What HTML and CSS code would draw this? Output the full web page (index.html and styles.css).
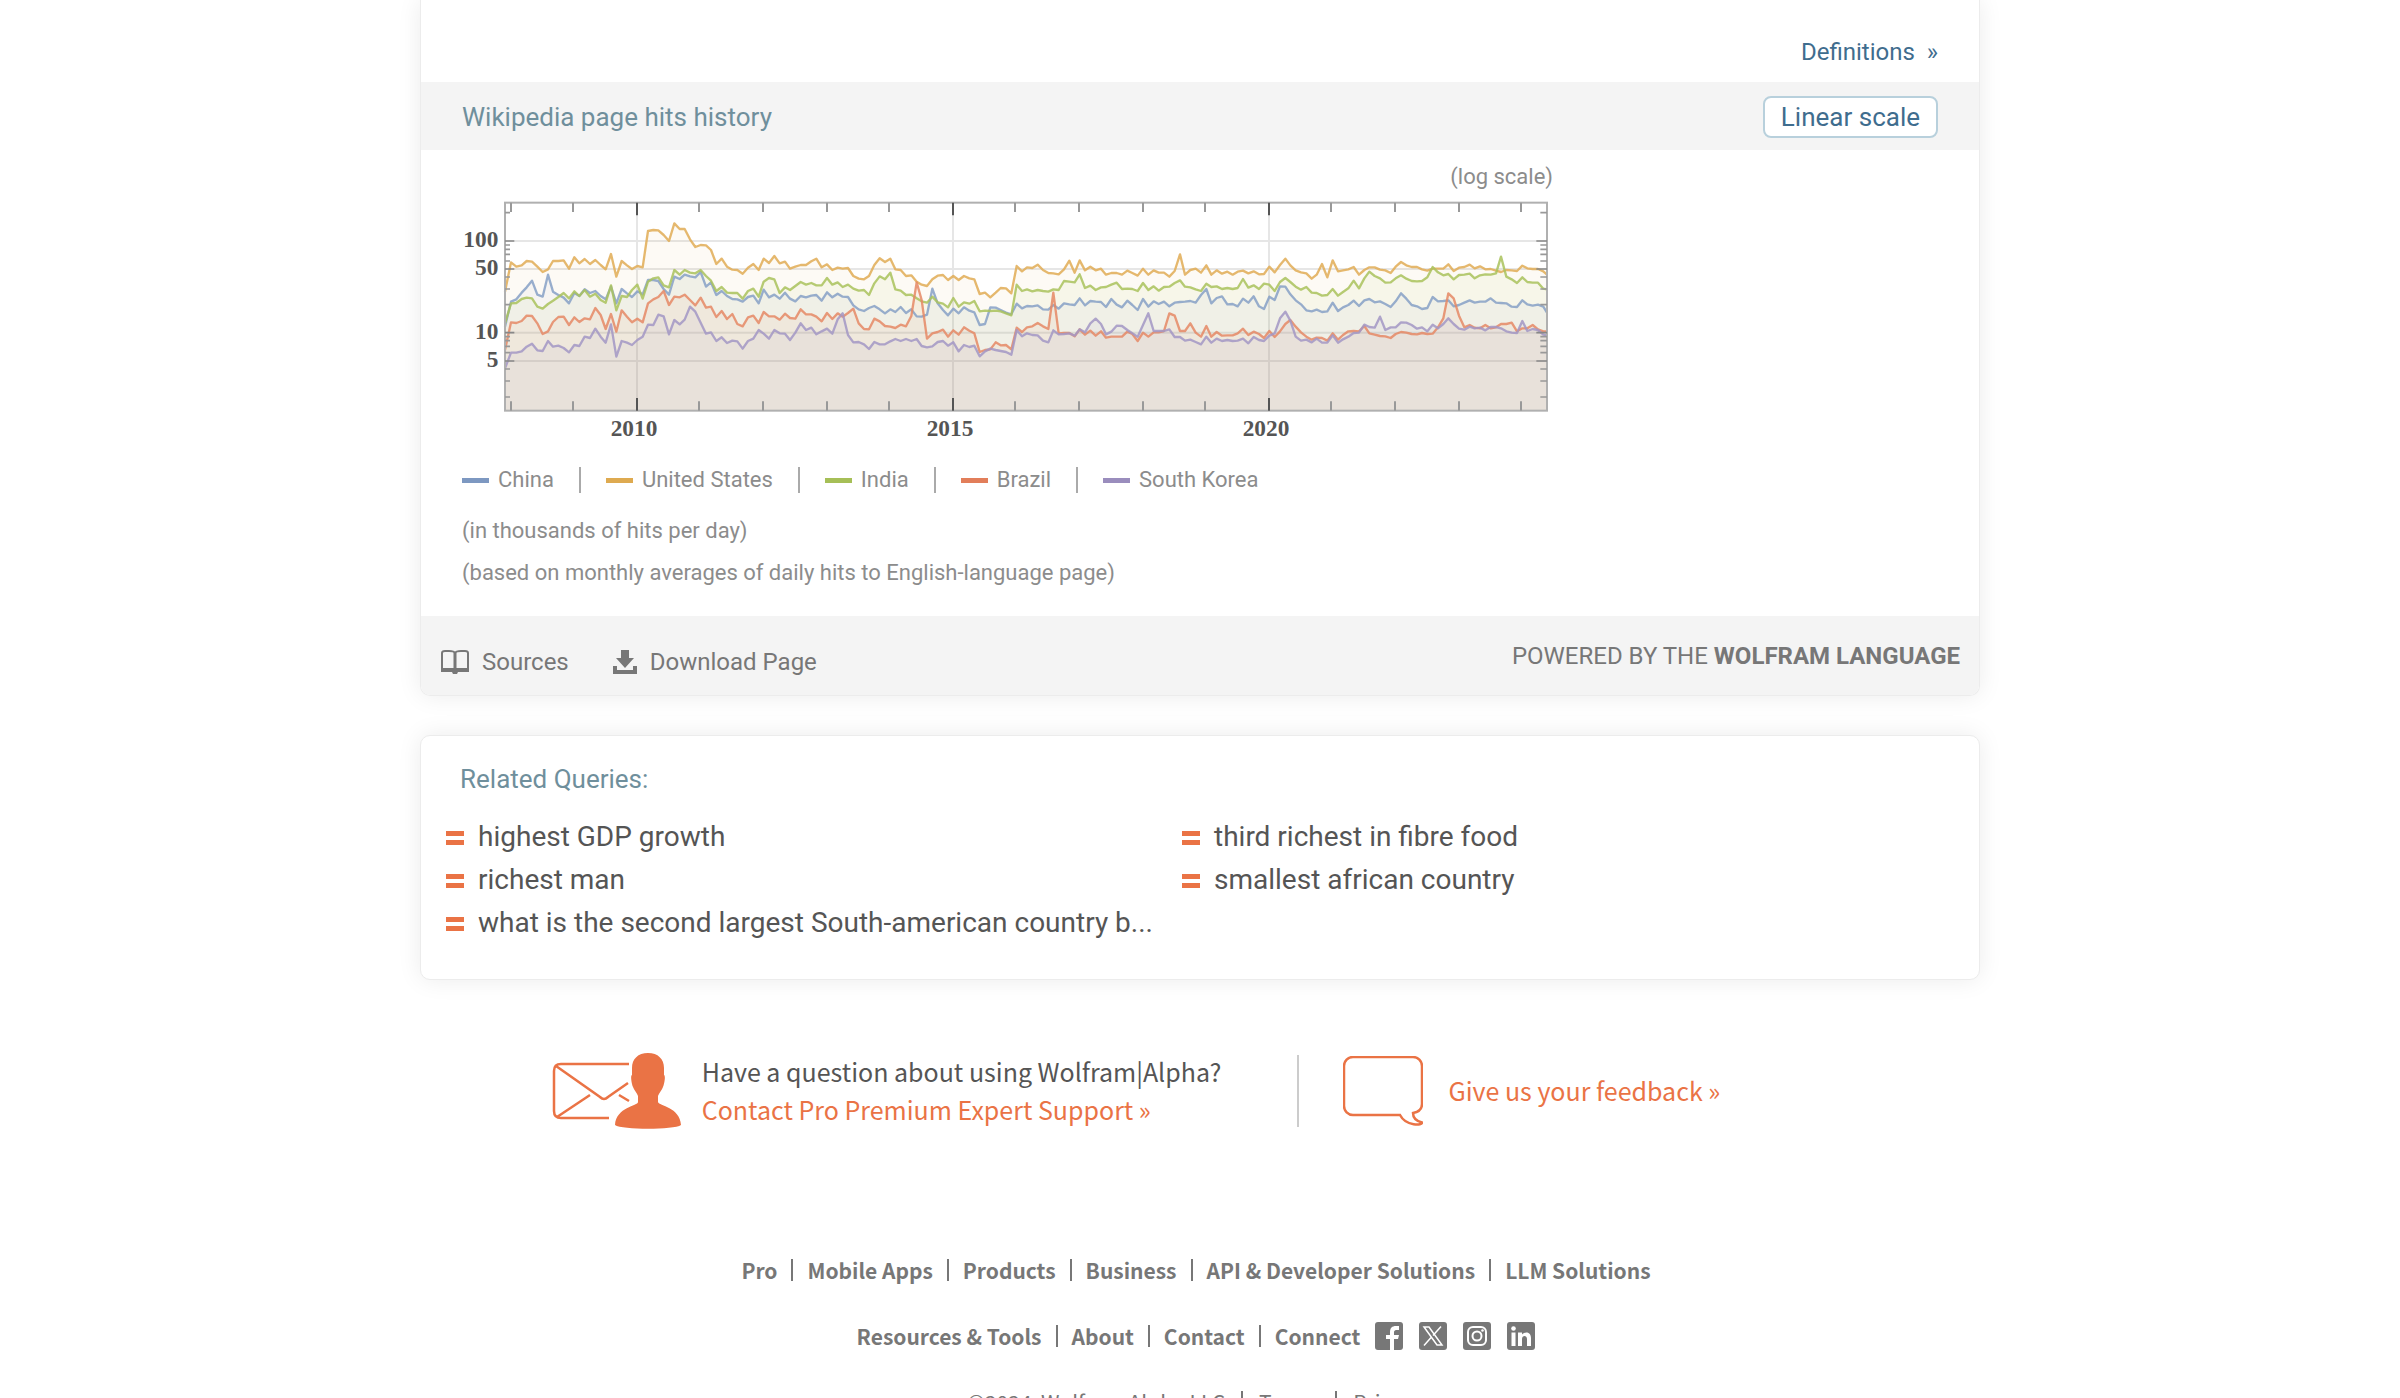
FILE: index.html
```html
<!DOCTYPE html>
<html lang="en">
<head>
<meta charset="utf-8">
<title>Wolfram|Alpha</title>
<link rel="stylesheet" href="styles.css">
</head>
<body>
<main class="page">
  <section class="card results">
    <div class="definitions"><a href="#">Definitions&nbsp; »</a></div>
    <header class="pod-head">
      <h2 class="pod-title">Wikipedia page hits history</h2>
      <button class="scale-button" type="button">Linear scale</button>
    </header>
    <div class="pod-body">
      <p class="scale-note">(log scale)</p>
      <svg class="chart" id="chart" viewBox="36 0 3300 750" role="img" aria-label="Wikipedia page hits history"></svg>
      <ul class="legend">
        <li class="china">China</li>
        <li class="us">United States</li>
        <li class="india">India</li>
        <li class="brazil">Brazil</li>
        <li class="korea">South Korea</li>
      </ul>
      <p class="note">(in thousands of hits per day)</p>
      <p class="note">(based on monthly averages of daily hits to English-language page)</p>
    </div>
    <footer class="card-foot">
      <div class="actions">
        <button class="action" type="button">
          <svg width="28" height="24" viewBox="0 0 28 24"><path fill="none" stroke="currentColor" stroke-width="2" d="M14 20V3C13 1 10 1 8 1H4Q1 1 1 3V19H27V3Q27 1 24 1H20C18 1 15 1 14 3"/><path stroke="currentColor" stroke-width="3" d="M14 2.500V20"/><path fill="currentColor" d="M0 18H10L14 20L18 18H28V22H17L16 24H12L11 22H0z"/></svg>
          Sources
        </button>
        <button class="action" type="button">
          <svg width="24" height="24" viewBox="0 0 24 24" fill="currentColor"><path d="M8 0h8v8h5l-9 10-9-10h5zM0 16h4v4h16v-4h4v8H0z"/></svg>
          Download Page
        </button>
      </div>
      <p class="powered">POWERED BY THE <a href="#">WOLFRAM LANGUAGE</a></p>
    </footer>
  </section>

  <section class="card related">
    <h2 class="related-title">Related Queries:</h2>
    <ul class="queries">
      <li><a href="#">highest GDP growth</a></li>
      <li><a href="#">third richest in fibre food</a></li>
      <li><a href="#">richest man</a></li>
      <li><a href="#">smallest african country</a></li>
      <li><a href="#">what is the second largest South-american country b...</a></li>
    </ul>
  </section>

  <section class="help">
    <div class="support">
      <svg width="129" height="76" viewBox="0 0 129 76"><g fill="none" stroke="currentColor" stroke-width="2.500"><path d="M77 11H9Q2 11 2 18V58Q2 65 9 65H57M4 13L48 44Q52 48 56 44L76 30M5 64L38 42M67 42L77 48"/></g><path fill="currentColor" d="M96 0C86 0 80 6 80 15V22C78 23 80 32 81 34C82 37 85 40 86 43V49C86 53 64 54 63 72C70 77 122 77 129 72C128 54 107 53 106 49V43C107 40 110 37 111 34C112 32 114 23 112 22V15C112 6 106 0 96 0Z"/></svg>
      <p>Have a question about using Wolfram|Alpha?<br><a href="#">Contact Pro Premium Expert Support »</a></p>
    </div>
    <div class="feedback">
      <svg width="80" height="70" viewBox="0 0 80 70" fill="none" stroke="currentColor" stroke-width="2.500"><path d="M57 59H10a9 9 0 0 1-9-9V10a9 9 0 0 1 9-9H70a9 9 0 0 1 9 9V48c0 5-3 8-9 9c0 5 3 8 9 9.500c1 3-16 4-22-7.500z"/></svg>
      <p><a href="#">Give us your feedback »</a></p>
    </div>
  </section>
</main>

<footer class="site-foot">
  <nav class="links">
    <a href="#">Pro</a><a href="#">Mobile Apps</a><a href="#">Products</a><a href="#">Business</a><a href="#">API &amp; Developer Solutions</a><a href="#">LLM Solutions</a>
  </nav>
  <div class="second-row">
    <nav class="links">
      <a href="#">Resources &amp; Tools</a><a href="#">About</a><a href="#">Contact</a><a href="#">Connect</a>
    </nav>
    <div class="social">
      <a href="#" aria-label="Facebook"><svg viewBox="0 0 28 28"><rect width="28" height="28" rx="3" fill="#777"/><path fill="#fff" d="M15 28V17h-4v-4h4v-3c0-4 2-6 6-6h3v4h-3c-1 0-2 1-2 2v3h5l-1 4h-4v11z"/></svg></a>
      <a href="#" aria-label="X"><svg viewBox="0 0 28 28"><rect width="28" height="28" rx="3" fill="#777"/><path fill="none" stroke="#fff" stroke-width="1.500" d="M5 5h5l13 18h-5zM22 4.500l-8 9M12.500 15L5 23.500"/></svg></a>
      <a href="#" aria-label="Instagram"><svg viewBox="0 0 28 28"><rect width="28" height="28" rx="3" fill="#777"/><g fill="none" stroke="#fff" stroke-width="2"><rect x="5" y="5" width="18" height="18" rx="5"/><circle cx="14" cy="14" r="4.500"/></g><circle cx="19.500" cy="8.500" r="1.300" fill="#fff"/></svg></a>
      <a href="#" aria-label="LinkedIn"><svg viewBox="0 0 28 28"><rect width="28" height="28" rx="3" fill="#777"/><circle cx="6.500" cy="6.500" r="2.300" fill="#fff"/><path fill="#fff" d="M4.500 10.500h4V24h-4zM11 10.500h4v2c2-3 9-3.500 9 3.500v8h-4v-7c0-4-5-4-5 0v7h-4z"/></svg></a>
    </div>
  </div>
  <div class="legal"><span>©2024&nbsp; Wolfram Alpha LLC</span><a href="#">Terms</a><a href="#">Privacy</a></div>
</footer>
<script src="script.js"></script>
</body>
</html>
```
FILE: styles.css
```css
*, *::before, *::after { box-sizing: border-box; }
body { margin: 0; background: #fff; color: #555; font-family: Roboto, sans-serif; }
h2, p, ul { margin: 0; padding: 0; font-weight: 400; }
ul { list-style: none; }
a { color: inherit; text-decoration: none; }
button { font: inherit; color: inherit; cursor: pointer; }
svg { display: block; flex: none; }

.page { max-width: 1560px; margin: 0 auto; }
.card { border: 1px solid #ececec; border-radius: 10px; box-shadow: 0 0 24px rgba(0, 0, 0, 0.08); overflow: hidden; background: #fff; }
.results { border-top: 0; border-radius: 0 0 10px 10px; }

.definitions { padding: 36px 41px 14px; text-align: right; font-size: 24px; line-height: 32px; color: #3f6d8e; }
.pod-head { display: flex; align-items: center; justify-content: space-between; height: 68px; padding: 2px 41px 0; background: #f4f4f4; }
.pod-title, .related-title { font-size: 26px; line-height: 32px; color: #6f8f9c; }
.scale-button { height: 42px; padding: 0 16px; border: 2px solid #b8d0dc; border-radius: 8px; background: #fff; color: #3f6d8e; font-size: 26px; line-height: 36px; }

.pod-body { padding: 12px 41px 29px; color: #8c8c8c; font-size: 22px; line-height: 28px; }
.scale-note { max-width: 1091px; height: 28px; line-height: 30px; text-align: right; }
.chart { width: 100%; max-width: 1100px; height: auto; }
.chart text { font-family: "Liberation Serif", serif; font-size: 70px; font-weight: 700; fill: #555; }
.legend { display: flex; padding: 26px 0 23px; }
.legend li { display: flex; align-items: center; }
.legend li::before { content: ""; width: 27px; height: 5px; margin-right: 9px; background: var(--swatch); }
.legend li + li { margin-left: 25px; }
.legend li:not(:last-child)::after { content: ""; width: 2px; height: 26px; margin-left: 25px; background: #aaa; }
.china { --swatch: #7d98c1; }
.us { --swatch: #deaa50; }
.india { --swatch: #a6bf57; }
.brazil { --swatch: #e27e5a; }
.korea { --swatch: #9a8dbd; }
.note + .note { margin-top: 14px; }

.card-foot { display: flex; justify-content: space-between; height: 79px; padding: 0 19px 0 20px; background: #f4f4f4; color: #777; font-size: 24px; line-height: 32px; }
.actions { display: flex; gap: 44px; padding-top: 30px; }
.action { display: flex; align-items: center; gap: 13px; height: 32px; padding: 0; border: 0; background: none; }
.powered { padding-top: 24px; }
.powered a { font-weight: 700; }

.related { margin-top: 39px; padding: 27px 24px 35px 25px; }
.related-title { padding: 0 14px; margin-bottom: 20px; }
.queries { display: grid; grid-template-columns: 736px 1fr; font-size: 28px; line-height: 43px; }
.queries li { display: flex; align-items: center; gap: 14px; }
.queries li::before { content: ""; width: 18px; height: 14px; margin-top: 3px; border: solid #ea7345; border-width: 5px 0; }

.help { display: flex; justify-content: center; margin-top: 69px; padding-right: 128px; font-family: "Noto Sans CJK SC", sans-serif; font-size: 25px; line-height: 38px; }
.help svg, .help a { color: #ea7345; }
.help p { padding-bottom: 3px; }
.support, .feedback { display: flex; align-items: center; height: 84px; }
.support { gap: 21px; padding-right: 76px; }
.feedback { gap: 25px; position: relative; padding-left: 46px; }
.feedback::before { content: ""; position: absolute; left: 0; top: 6px; width: 2px; height: 72px; background: #ccc; }

.site-foot { display: flex; flex-direction: column; align-items: center; padding: 121px 8px 0 0; font-family: "Noto Sans CJK SC", sans-serif; font-size: 21px; line-height: 32px; color: #777; }
.links { display: flex; font-weight: 700; }
.links a, .legal > * { display: flex; align-items: center; }
.links a + a::before, .legal > * + *::before { content: ""; width: 2px; height: 22px; margin: 0 14px; background: #777; }
.legal > * + *::before { margin: 0 16px; }
.second-row { display: flex; align-items: center; gap: 15px; margin-top: 34px; }
.social { display: flex; gap: 16px; }
.social svg { width: 28px; height: 28px; }
.legal { display: flex; margin-top: 34px; }
```
FILE: script.js
```js
// Plot area and time axis, in chart units (three per pixel).
const LEFT = 165, RIGHT = 3291, TOP = 38, BOTTOM = 662;
const JAN_2008 = 183, MONTH = 15.8;

// Line color, fill opacity, and one height per month: the value at the left edge,
// January 2008 onwards, then the right edge.
const series = [
  ["#e0ac55", 0.06, "305 217 230 226 213 215 230 246 238 213 213 211 236 202 220 207 222 210 225 238 192 260 213 226 237 228 232 123 120 121 135 153 100 117 117 148 171 165 166 180 222 206 230 239 240 251 233 222 240 206 219 198 220 215 236 230 225 225 214 206 232 223 240 233 236 234 258 266 268 258 225 205 216 206 238 240 258 256 275 284 288 268 257 255 270 258 270 258 265 268 312 308 322 308 294 295 310 228 244 232 234 224 240 249 250 253 238 212 248 211 241 230 241 236 254 249 249 254 242 249 257 236 254 241 248 248 260 243 193 254 240 236 248 226 254 241 251 245 254 245 242 250 244 253 252 230 247 225 206 226 241 247 250 266 254 222 262 211 244 241 238 231 254 240 232 232 239 241 249 230 216 226 231 231 238 242 236 236 236 223 243 233 231 224 235 229 238 237 242 246 240 241 243 227 235 237 237 244 254"],
  ["#a9c25c", 0.07, "400 340 339 327 323 325 350 356 342 332 321 309 325 304 318 300 320 311 330 338 286 361 318 321 300 284 326 275 265 262 286 292 240 254 240 248 250 240 258 272 303 291 308 309 309 326 303 296 320 275 264 268 309 292 300 288 276 284 279 286 286 264 284 277 291 284 296 302 300 315 280 259 268 248 298 302 315 314 325 334 338 320 337 341 352 324 350 337 341 333 364 362 363 362 364 370 376 284 303 298 304 300 303 305 298 300 273 275 277 253 294 287 300 292 291 284 278 297 296 297 303 279 300 289 302 291 290 279 271 290 292 298 303 281 291 289 297 294 297 294 267 293 286 297 281 284 303 276 264 276 290 299 291 308 309 317 315 297 317 306 295 272 295 265 245 258 265 278 277 265 256 266 273 274 273 262 231 247 256 252 268 255 254 251 265 256 253 254 250 200 260 268 279 262 276 278 278 296 298"],
  ["#86a0c6", 0.06, "410 335 328 308 292 272 314 320 254 305 315 323 340 309 318 298 309 303 318 328 290 340 297 310 321 304 313 270 270 273 297 314 260 267 254 259 262 246 290 277 315 303 318 327 328 335 321 317 340 299 322 314 326 308 326 334 318 322 317 315 332 307 322 311 320 321 346 358 363 354 348 358 370 358 366 351 369 358 379 380 374 296 340 360 376 356 370 352 362 367 405 402 352 353 360 368 373 341 355 348 349 346 358 359 345 356 340 343 345 325 346 333 335 336 351 327 344 352 332 345 360 327 350 334 342 335 349 338 336 335 333 338 315 297 340 324 319 343 342 349 326 338 319 349 357 320 330 289 290 313 331 343 361 364 359 366 364 338 363 352 345 332 348 331 327 337 334 342 351 334 310 326 345 349 357 354 321 334 333 331 349 345 338 331 338 335 335 325 338 339 340 350 351 331 343 347 344 350 368"],
  ["#e58865", 0.08, "480 397 399 393 377 378 400 432 424 396 381 380 405 382 396 385 388 354 375 417 372 425 361 380 397 386 397 340 328 321 303 345 320 322 314 330 346 323 353 350 381 363 387 372 402 409 382 377 399 366 379 379 389 371 384 386 358 373 373 380 394 369 387 370 380 369 356 400 417 418 386 394 408 410 414 404 409 378 277 330 446 430 426 419 440 421 434 412 422 430 486 480 478 457 466 465 478 413 426 412 409 399 409 417 308 430 429 429 439 418 434 422 437 424 443 440 440 440 425 432 453 428 440 427 427 423 370 377 423 423 400 428 440 408 440 426 437 436 436 430 416 435 425 432 444 423 441 424 402 390 410 427 440 449 443 444 452 430 449 435 424 423 424 408 430 434 438 439 444 432 426 428 432 433 429 432 431 412 385 310 325 377 412 405 413 415 405 415 412 402 402 398 424 415 415 405 418 424 424"],
  ["#a296c4", 0.09, "535 488 488 484 470 461 481 483 453 470 467 474 487 465 468 440 444 416 440 458 403 500 453 458 465 450 440 404 405 374 379 433 390 403 389 350 365 398 431 427 453 442 459 452 454 476 453 446 420 431 446 420 430 431 450 428 400 420 413 433 424 416 431 388 370 435 457 456 463 477 456 463 463 454 447 453 447 453 447 468 472 469 456 453 467 457 484 465 471 467 499 484 476 480 483 486 494 420 439 430 435 436 452 457 421 433 432 430 437 418 427 400 386 402 433 425 407 408 420 430 440 405 370 423 423 423 418 441 441 452 449 456 463 440 458 446 453 450 453 452 446 460 441 450 453 437 430 385 365 392 440 452 449 457 446 458 458 436 458 448 440 429 428 404 411 413 380 420 412 412 397 398 405 416 412 424 404 415 402 385 402 416 419 410 415 413 421 411 411 415 424 428 429 393 423 417 420 434 436"]
];

const chart = document.getElementById("chart");
const add = (name, attributes, text) => {
  const node = document.createElementNS("http://www.w3.org/2000/svg", name);
  for (const key in attributes) node.setAttribute(key, attributes[key]);
  if (text) node.textContent = text;
  chart.append(node);
};
const line = (d, stroke, width, opacity = 1) =>
  add("path", { d, stroke, "stroke-width": width, "stroke-opacity": opacity, fill: "none", "stroke-linejoin": "round" });
const atMonth = m => Math.round(JAN_2008 + MONTH * m);
// Ticks and grid lines sit on a two-pixel raster.
const tickAt = m => JAN_2008 + 6 * Math.floor(MONTH * m / 6);

const majorY = [[153, "100"], [237, "50"], [428, "10"], [513, "5"]];
const minorY = [68, 165, 178, 193, 213, 261, 297, 344, 440, 452, 469, 488, 537, 573, 621];
const majorX = [[24, "2010"], [84, "2015"], [144, "2020"]];

for (const [y] of majorY) line(`M${LEFT} ${y}H${RIGHT}`, "#e6e6e6", 6);
for (const [m] of majorX) line(`M${tickAt(m)} ${TOP}V${BOTTOM}`, "#e6e6e6", 6);

const curves = series.map(([color, opacity, values]) => {
  const ys = values.split(" ");
  const points = ys.map((y, i) => {
    const x = i === 0 ? LEFT : i === ys.length - 1 ? RIGHT : atMonth(i - 1);
    return `${x} ${y}`;
  });
  return [color, opacity, `M${points.join("L")}`];
});
for (const [color, opacity, d] of curves) {
  add("path", { d: `${d}V${BOTTOM}H${LEFT}Z`, fill: color, "fill-opacity": opacity });
}
for (const [color, , d] of [curves[2], curves[0], curves[1], curves[3], curves[4]]) {
  line(d, color, 7, 0.85);
}

add("rect", { x: LEFT, y: TOP, width: RIGHT - LEFT, height: BOTTOM - TOP, fill: "none", stroke: "#b0b0b0", "stroke-width": 6 });
for (let m = 0; m < 197; m += 12) {
  const major = majorX.some(([month]) => month === m);
  const size = major ? 38 : 28;
  line(`M${tickAt(m)} ${TOP}v${size}M${tickAt(m)} ${BOTTOM}v-${size}`, major ? "#555" : "#999", 6);
}
for (const [y, label] of majorY) {
  line(`M${LEFT} ${y}h28M${RIGHT} ${y}h-32`, "#888", 5);
  add("text", { x: 145, y: y + 18, "text-anchor": "end" }, label);
}
for (const y of minorY) line(`M${LEFT} ${y}h15M${RIGHT} ${y}h-20`, "#999", 5);
for (const [m, label] of majorX) add("text", { x: tickAt(m) - 9, y: 737, "text-anchor": "middle" }, label);
```
